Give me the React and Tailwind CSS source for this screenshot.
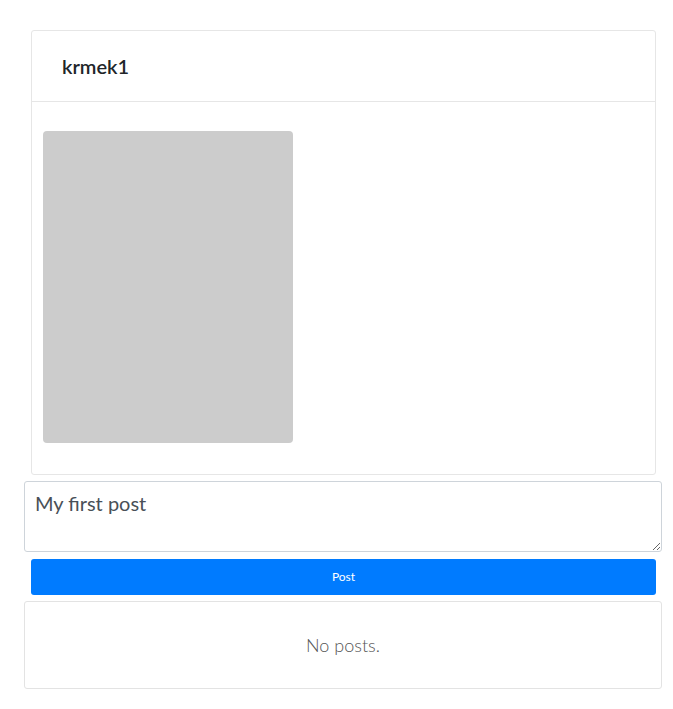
export default function App() {
  return (
    <div className="min-h-[709px] bg-white pl-6 pr-[11px] pt-[30px]" style={{ fontFamily: '"Segoe UI", Lato, "Open Sans", sans-serif' }}>
      <div className="ml-[7px] mr-[6px] rounded-[3px] border border-[#e6e6e6]">
        <div className="flex h-[71px] items-center border-b border-[#e6e6e6] px-[30px]">
          <span className="text-[20px] font-semibold text-[#212529]">krmek1</span>
        </div>
        <div className="px-[11px] pb-[31px] pt-[29px]">
          <div className="h-[312px] w-[250px] rounded-[4px] bg-[#cccccc]" />
        </div>
      </div>
      <textarea
        className="mt-[6px] block h-[71px] w-full resize-y rounded-[3px] border border-[#ced4da] px-[10px] py-[6px] text-[20px] leading-[30px] text-[#495057] outline-none"
        defaultValue="My first post"
      />
      <div className="ml-[7px] mr-[6px] mt-[7px]">
        <button className="flex h-[36px] w-full items-center justify-center rounded-[3px] bg-[#007bff] text-[12px] text-white">
          Post
        </button>
      </div>
      <div className="mt-[6px] flex h-[88px] items-center justify-center rounded-[3px] border border-[#e3e3e3]">
        <span className="text-[18px] font-light text-[#555555]">No posts.</span>
      </div>
    </div>
  );
}
